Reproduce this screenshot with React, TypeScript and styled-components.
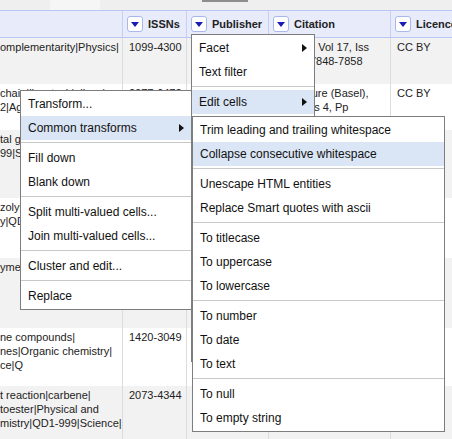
import styled, { createGlobalStyle } from "styled-components";

const GlobalStyle = createGlobalStyle`
  html, body {
    margin: 0;
    padding: 0;
    background: #fff;
  }
  body {
    font-family: "Liberation Sans", Arial, sans-serif;
  }
`;

const Page = styled.div`
  position: relative;
  width: 452px;
  height: 439px;
  overflow: hidden;
  background: #fff;
`;

const TopStrip = styled.div`
  height: 10px;
  background: #efefef;
  display: flex;
  align-items: flex-start;
`;

const StripPiece = styled.div<{ $w: number; $kind: "gap" | "light" | "dark" }>`
  width: ${(p) => p.$w}px;
  height: ${(p) => (p.$kind === "dark" ? 2 : 10)}px;
  background: ${(p) =>
    p.$kind === "dark" ? "#8e8e8e" : p.$kind === "light" ? "#f6f6f6" : "transparent"};
`;

const cols = "122px 64px 82px 122px 1fr";

const HeaderRow = styled.div`
  display: grid;
  grid-template-columns: ${cols};
  height: 28px;
  box-sizing: border-box;
  background: #e7ebfa;
  border-top: 1px solid #b9c6f0;
  border-bottom: 1px solid #b9c6f0;
`;

const HeaderCell = styled.div<{ $first?: boolean }>`
  display: flex;
  align-items: center;
  gap: 5px;
  padding-left: 4px;
  border-left: ${(p) => (p.$first ? "none" : "1px solid #c5cff2")};
  font-size: 11px;
  font-weight: bold;
  color: #222;
  white-space: nowrap;
  overflow: hidden;
`;

const DropButton = styled.span`
  flex: none;
  display: flex;
  align-items: center;
  justify-content: center;
  width: 16px;
  height: 16px;
  box-sizing: border-box;
  background: #fff;
  border: 1px solid #a9b8ea;
  border-radius: 3px;
  &::after {
    content: "";
    width: 0;
    height: 0;
    margin-top: 1px;
    border-top: 5px solid #1a1ab4;
    border-left: 4.5px solid transparent;
    border-right: 4.5px solid transparent;
  }
`;

const BodyRow = styled.div<{ $h: number; $odd: boolean }>`
  display: grid;
  grid-template-columns: ${cols};
  height: ${(p) => p.$h}px;
  background: ${(p) => (p.$odd ? "#f2f2f2" : "#fff")};
  font-size: 11px;
  line-height: 14px;
  color: #222;
`;

const Cell = styled.div<{ $first?: boolean; $nowrap?: boolean }>`
  padding: 2px ${(p) => (p.$first ? "0" : "6px")};
  border-left: ${(p) => (p.$first ? "none" : "1px solid #dcdcdc")};
  overflow: hidden;
  white-space: ${(p) => (p.$first || p.$nowrap ? "nowrap" : "normal")};
`;

const NoBreak = styled.span`
  white-space: nowrap;
`;

const Menu = styled.div<{ $x: number; $y: number; $w: number; $z: number }>`
  position: absolute;
  left: ${(p) => p.$x}px;
  top: ${(p) => p.$y}px;
  width: ${(p) => p.$w}px;
  z-index: ${(p) => p.$z};
  box-sizing: border-box;
  padding: 1px 0;
  background: #fff;
  border: 1px solid #7d7d7d;
  font-size: 12px;
  color: #111;
`;

const MenuItem = styled.div<{ $active?: boolean }>`
  display: flex;
  align-items: center;
  justify-content: space-between;
  height: 24px;
  padding: 0 7px;
  background: ${(p) => (p.$active ? "#dae5f5" : "transparent")};
  white-space: nowrap;
`;

const SubArrow = styled.span`
  width: 0;
  height: 0;
  border-left: 5px solid #111;
  border-top: 4px solid transparent;
  border-bottom: 4px solid transparent;
`;

const MenuSep = styled.div`
  height: 1px;
  margin: 2px 0 3px;
  background: #c8c8c8;
`;

type Row = {
  h: number;
  first: string[];
  issn: string;
  publisher: string;
  citation: string;
  licence: string;
};

const rows: Row[] = [
  {
    h: 46,
    first: ["omplementarity|Physics|"],
    issn: "1099-4300",
    publisher: "MDPI AG",
    citation: "Entropy, Vol 17, Iss 12, Pp 7848-7858 (2015)",
    licence: "CC BY",
  },
  {
    h: 46,
    first: ["chain|livestock|alleys|", "2|Agriculture (General)|"],
    issn: "2077-0472",
    publisher: "MDPI AG",
    citation: "Agriculture (Basel), Vol 5, Iss 4, Pp 1180-1198 (2015)",
    licence: "CC BY",
  },
  {
    h: 68,
    first: ["tal governance|", "99|Science|"],
    issn: "1660-4601",
    publisher: "MDPI AG",
    citation: "Int J Environ Res Public Health, Vol 12, Iss 12 (2015)",
    licence: "CC BY",
  },
  {
    h: 60,
    first: ["zolyl|", "y|QD1-999|"],
    issn: "1420-3049",
    publisher: "MDPI AG",
    citation: "Molecules, Vol 20, Iss 12 (2015)",
    licence: "CC BY",
  },
  {
    h: 70,
    first: ["ymelting|"],
    issn: "2073-4360",
    publisher: "MDPI AG",
    citation: "Polymers, Vol 7, Iss 12 (2015)",
    licence: "CC BY",
  },
  {
    h: 58,
    first: ["ne compounds|", "nes|Organic chemistry|", "ce|Q"],
    issn: "1420-3049",
    publisher: "MDPI AG",
    citation: "Molecules, Vol 20, Iss 12 (2015)",
    licence: "CC BY",
  },
  {
    h: 60,
    first: ["t reaction|carbene|", "toester|Physical and", "mistry|QD1-999|Science|"],
    issn: "2073-4344",
    publisher: "MDPI AG",
    citation: "Catalysts, Vol 5, Iss 4 (2015)",
    licence: "CC BY",
  },
];

const headers = ["", "ISSNs", "Publisher", "Citation", "Licence"];

type Entry = { label: string; sub?: boolean; active?: boolean } | "sep";

const columnMenu: Entry[] = [
  { label: "Facet", sub: true },
  { label: "Text filter" },
  "sep",
  { label: "Edit cells", sub: true, active: true },
  { label: "Edit column", sub: true },
  { label: "Transpose", sub: true },
  "sep",
  { label: "Sort..." },
  "sep",
  { label: "View", sub: true },
  "sep",
  { label: "Reconcile", sub: true },
  "sep",
  { label: "Add column", sub: true },
  { label: "Rename column" },
  { label: "Remove column" },
  "sep",
  { label: "Move column", sub: true },
];

const editCellsMenu: Entry[] = [
  { label: "Transform..." },
  { label: "Common transforms", sub: true, active: true },
  "sep",
  { label: "Fill down" },
  { label: "Blank down" },
  "sep",
  { label: "Split multi-valued cells..." },
  { label: "Join multi-valued cells..." },
  "sep",
  { label: "Cluster and edit..." },
  "sep",
  { label: "Replace" },
];

const transformsMenu: Entry[] = [
  { label: "Trim leading and trailing whitespace" },
  { label: "Collapse consecutive whitespace", active: true },
  "sep",
  { label: "Unescape HTML entities" },
  { label: "Replace Smart quotes with ascii" },
  "sep",
  { label: "To titlecase" },
  { label: "To uppercase" },
  { label: "To lowercase" },
  "sep",
  { label: "To number" },
  { label: "To date" },
  { label: "To text" },
  "sep",
  { label: "To null" },
  { label: "To empty string" },
];

// page ranges like 7848-7858 must not break at the hyphen
const keepRanges = (text: string) =>
  text.split(" ").map((word, i) => (
    <span key={i}>
      {i > 0 && " "}
      {word.includes("-") ? <NoBreak>{word}</NoBreak> : word}
    </span>
  ));

const MenuEntries = ({ items }: { items: Entry[] }) => (
  <>
    {items.map((it, i) =>
      it === "sep" ? (
        <MenuSep key={i} />
      ) : (
        <MenuItem key={i} $active={it.active}>
          <span>{it.label}</span>
          {it.sub && <SubArrow />}
        </MenuItem>
      )
    )}
  </>
);

export default function App() {
  return (
    <Page>
      <GlobalStyle />
      <TopStrip>
        <StripPiece $w={50} $kind="gap" />
        <StripPiece $w={50} $kind="light" />
        <StripPiece $w={102} $kind="gap" />
        <StripPiece $w={46} $kind="dark" />
      </TopStrip>
      <HeaderRow>
        {headers.map((h, i) => (
          <HeaderCell key={i} $first={i === 0}>
            {i > 0 && <DropButton />}
            {h}
          </HeaderCell>
        ))}
      </HeaderRow>
      {rows.map((r, i) => (
        <BodyRow key={i} $h={r.h} $odd={i % 2 === 0}>
          <Cell $first>
            {r.first.map((line, j) => (
              <div key={j}>{line}</div>
            ))}
          </Cell>
          <Cell $nowrap>{r.issn}</Cell>
          <Cell>{r.publisher}</Cell>
          <Cell>{keepRanges(r.citation)}</Cell>
          <Cell>{r.licence}</Cell>
        </BodyRow>
      ))}

      <Menu $x={191} $y={34} $w={124} $z={1}>
        <MenuEntries items={columnMenu} />
      </Menu>
      <Menu $x={20} $y={90} $w={172} $z={2}>
        <MenuEntries items={editCellsMenu} />
      </Menu>
      <Menu $x={192} $y={116} $w={253} $z={3}>
        <MenuEntries items={transformsMenu} />
      </Menu>
    </Page>
  );
}
